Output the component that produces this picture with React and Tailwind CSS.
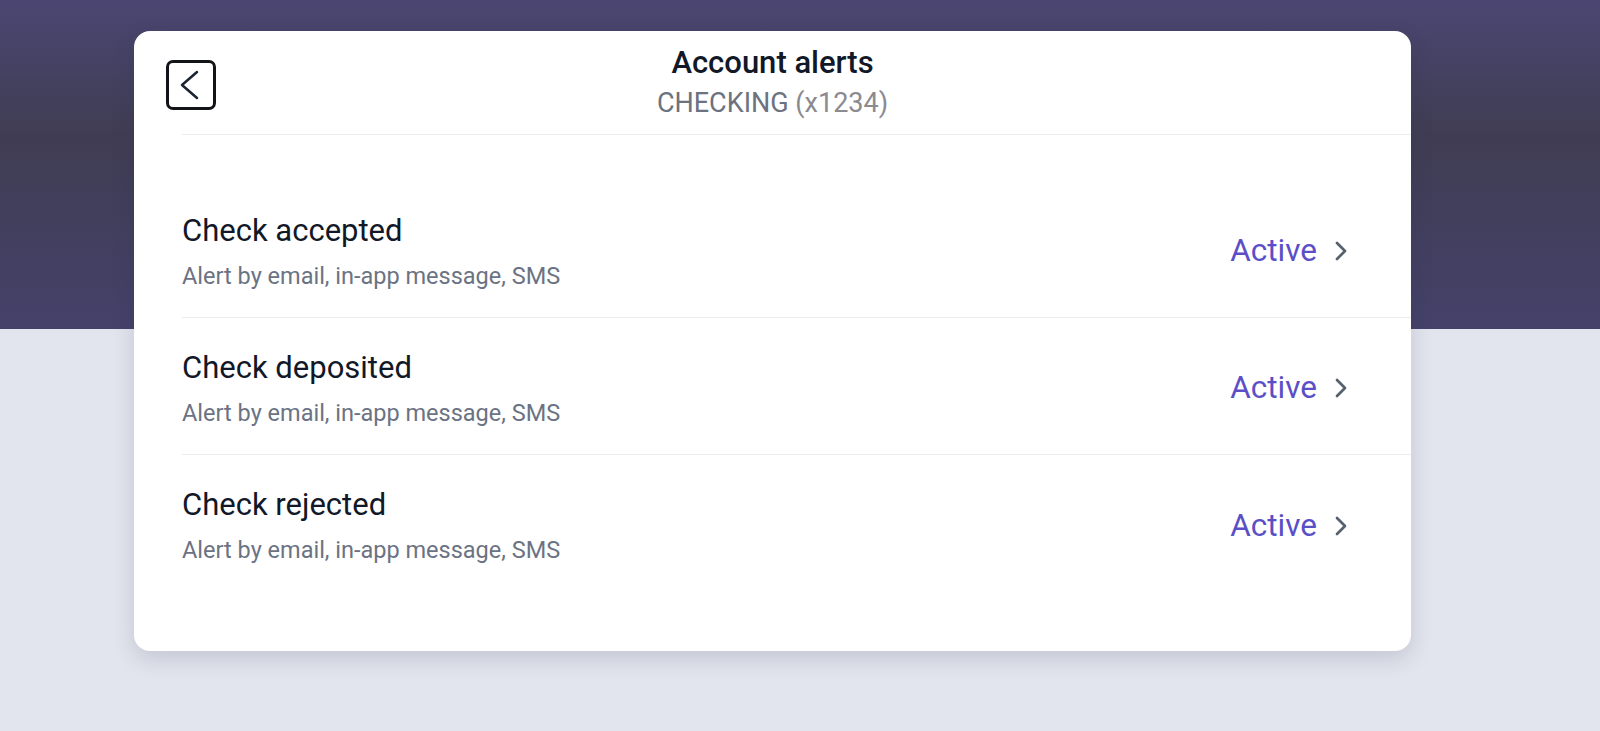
import React from "react";

const alerts = [
  { name: "Check accepted", channels: "Alert by email, in-app message, SMS", status: "Active" },
  { name: "Check deposited", channels: "Alert by email, in-app message, SMS", status: "Active" },
  { name: "Check rejected", channels: "Alert by email, in-app message, SMS", status: "Active" },
];

function BackIcon() {
  return (
    <svg width="44" height="44" viewBox="0 0 44 44" fill="none">
      <path d="M28 9 L13 22 L28 35" stroke="#1b2230" strokeWidth="2.5" strokeLinecap="round" strokeLinejoin="round" />
    </svg>
  );
}

function ChevronRight() {
  return (
    <svg width="12" height="20" viewBox="0 0 12 20" fill="none">
      <path d="M2 2 L10 10 L2 18" stroke="#56616f" strokeWidth="2.7" strokeLinecap="round" strokeLinejoin="round" />
    </svg>
  );
}

function AlertRow({ item, last }) {
  return (
    <div className={`flex h-[137px] items-center justify-between pr-[64px] ${last ? "" : "border-b border-[#ececee]"}`}>
      <div className="flex flex-col gap-[9px] pt-[4px]">
        <div className="text-[31px] leading-[40px] text-[#111827]">{item.name}</div>
        <div className="text-[23.5px] leading-[32px] text-[#6b7383]">{item.channels}</div>
      </div>
      <div className="flex items-center gap-[18px] pt-[4px]">
        <span className="text-[31.5px] leading-[40px] text-[#5b4fc7]">{item.status}</span>
        <ChevronRight />
      </div>
    </div>
  );
}

export default function App() {
  return (
    <div
      className="min-h-[731px] w-full pt-[31px] bg-[linear-gradient(180deg,#4a4672_0px,#403d53_135px,#45416a_329px,#e2e5ee_329px,#e2e5ee_100%)]"
      style={{ fontFamily: "Roboto, 'Noto Sans', 'Liberation Sans', sans-serif" }}
    >
      <div className="ml-[134px] w-[1277px] rounded-[16px] bg-white pb-[59px] shadow-[0_8px_22px_rgba(40,45,70,0.16)]">
        <div className="grid h-[103px] grid-cols-[1fr_auto_1fr]">
          <div className="self-start pl-[32px] pt-[29px]">
            <button className="flex h-[50px] w-[50px] items-center justify-center rounded-[7px] border-[3px] border-[#121418] bg-white">
              <BackIcon />
            </button>
          </div>
          <div className="flex flex-col items-center gap-[6px] self-start pt-[14px]">
            <div className="text-[31px] font-medium leading-[36px] text-[#111827]">Account alerts</div>
            <div className="text-[27px] leading-[32px] text-[#6b7280]">
              CHECKING <span className="text-[#8a8a8f]">(x1234)</span>
            </div>
          </div>
          <div />
        </div>
        <div className="ml-[48px] border-t border-[#ececee]">
          <div className="pt-[46px]">
            {alerts.map((a, i) => (
              <AlertRow key={a.name} item={a} last={i === alerts.length - 1} />
            ))}
          </div>
        </div>
      </div>
    </div>
  );
}
